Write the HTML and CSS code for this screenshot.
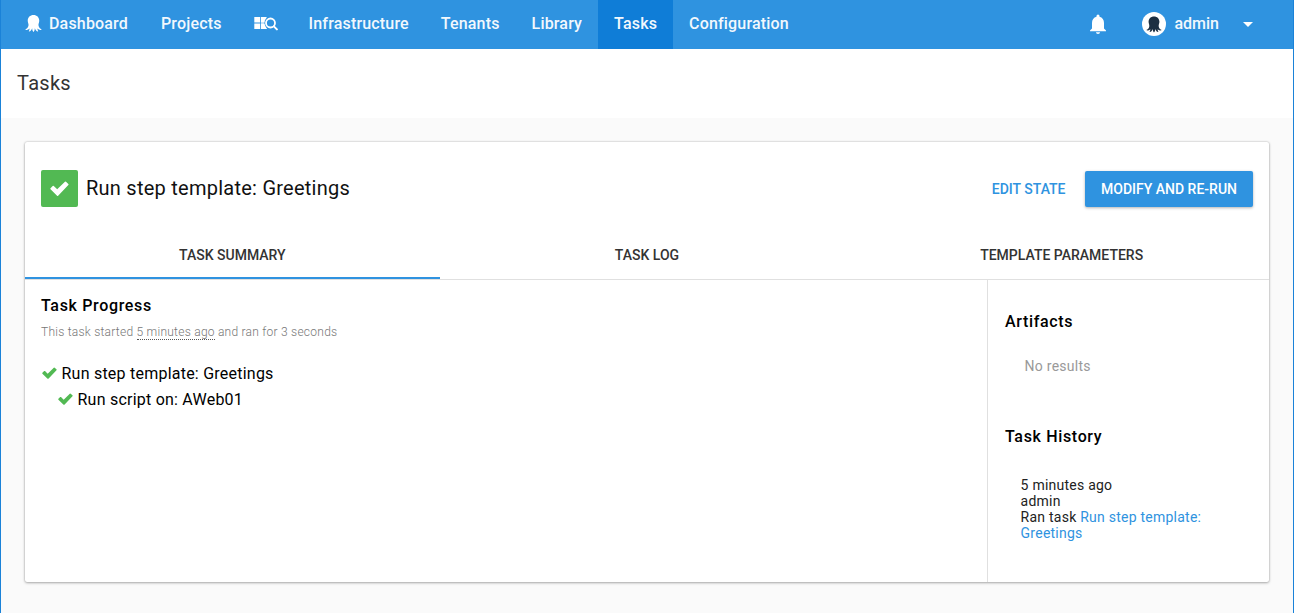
FILE: index.html
```html
<!DOCTYPE html>
<html lang="en">
<head>
<meta charset="utf-8">
<title>Tasks</title>
<link rel="stylesheet" href="styles.css">
</head>
<body>
<svg class="sprite" width="0" height="0">
  <symbol id="octopus" viewBox="0 0 18 19">
    <path d="M9 .5C5.400.5 2.900 3 2.900 6.500c0 2 1.100 3.200.8 5.200C3.400 13.800 2 15 .3 15.800c1.200 1 2.900.6 4.600-.9-.1 1.200-.4 2-.9 3 1.700.2 2.700-1.200 3.600-3.400.1 1.800.4 3 1.400 4 1-1 1.300-2.200 1.400-4 .9 2.200 1.900 3.600 3.600 3.400-.5-1-.8-1.800-.9-3 1.700 1.500 3.400 1.900 4.600.9-1.700-.8-3.100-2-3.400-4.100-.3-2 .8-3.200.8-5.200C15.100 3 12.600.5 9 .5z"/>
  </symbol>
  <symbol id="check" viewBox="0 0 14 11">
    <path d="M5.200 10.800.4 6.100a.6.6 0 0 1 0-.8L2 3.700a.6.6 0 0 1 .8 0l2.500 2.400L11 .5a.6.6 0 0 1 .8 0l1.700 1.600a.6.6 0 0 1 0 .8L6 10.800a.6.6 0 0 1-.8 0z"/>
  </symbol>
</svg>
<div class="app">
  <header class="topbar">
    <nav class="nav">
      <a class="nav-item nav-home"><svg class="logo"><use href="#octopus"/></svg>Dashboard</a>
      <a class="nav-item">Projects</a>
      <a class="nav-item nav-search">
        <svg width="24" height="15" viewBox="0 0 24 15">
          <path fill="#fff" d="M.3 1h5.900v5.600H.3zM.3 7.400h5.900V13H.3zM7 1h5.500v5.600H7zM7 7.400h5.500V13H7z"/>
          <circle cx="16.500" cy="7" r="6.200" fill="#2f93e0"/>
          <path fill="#fff" d="M7 1h5.500l-2 3v2.600H7zM7 7.400h3.300l.7 3 2 2.600H7z"/>
          <circle cx="16.500" cy="7" r="4.500" fill="none" stroke="#fff" stroke-width="1.800"/>
          <path d="m19.900 10.400 3 3" stroke="#fff" stroke-width="2" stroke-linecap="round"/>
        </svg>
      </a>
      <a class="nav-item">Infrastructure</a>
      <a class="nav-item">Tenants</a>
      <a class="nav-item">Library</a>
      <a class="nav-item active">Tasks</a>
      <a class="nav-item">Configuration</a>
    </nav>
    <div class="account">
      <svg class="bell" width="16" height="20" viewBox="0 0 16 20"><path fill="#fff" d="M8 20c1.100 0 2-.8 2-1.700H6C6 19.200 6.900 20 8 20zm6-5.500V9c0-3.100-1.600-5.600-4.500-6.300V2a1.500 1.500 0 0 0-3 0v.7C3.600 3.400 2 5.900 2 9v5.500l-2 2v.8h16v-.8z"/></svg>
      <span class="avatar"><svg><use href="#octopus"/></svg></span>
      <span class="user">admin</span>
      <svg class="caret" width="10" height="5" viewBox="0 0 10 5"><path fill="#fff" d="M0 0h10L5 5z"/></svg>
    </div>
  </header>
  <div class="page-head">Tasks</div>
  <main class="content">
    <section class="card">
      <div class="card-head">
        <span class="status"><svg><use href="#check"/></svg></span>
        <h1 class="title">Run step template: Greetings</h1>
        <a class="edit">EDIT STATE</a>
        <button class="primary">MODIFY AND RE-RUN</button>
      </div>
      <div class="tabs">
        <div class="tab selected">TASK SUMMARY</div>
        <div class="tab">TASK LOG</div>
        <div class="tab">TEMPLATE PARAMETERS</div>
      </div>
      <div class="card-body">
        <div class="progress">
          <h2>Task Progress</h2>
          <p class="started">This task started <span class="ago">5 minutes ago</span> and ran for 3 seconds</p>
          <div class="step"><svg><use href="#check"/></svg>Run step template: Greetings</div>
          <div class="step child"><svg><use href="#check"/></svg>Run script on: AWeb01</div>
        </div>
        <aside class="side">
          <h2>Artifacts</h2>
          <p class="empty">No results</p>
          <h2>Task History</h2>
          <div class="history">5 minutes ago<br>admin<br>Ran task <a>Run step template:<br>Greetings</a></div>
        </aside>
      </div>
    </section>
  </main>
</div>
</body>
</html>
```
FILE: styles.css
```css
* { box-sizing: border-box; }
body { margin: 0; font-family: Roboto, sans-serif; color: #000; }
h1, h2, p { margin: 0; }
.sprite { display: block; position: absolute; }
.app { height: 613px; border: solid #1a82d8; border-width: 0 1px; background: #fafafa; display: flex; flex-direction: column; overflow: hidden; }
.topbar { height: 49px; background: #2f93e0; display: flex; justify-content: space-between; color: #fff; font-size: 16px; font-weight: 500; }
.nav { display: flex; padding-left: 8px; letter-spacing: .17px; }
.nav-item { display: flex; align-items: center; padding: 0 16px 2px; color: #f2f8fd; }
.nav-item.active { background: #0f7dd7; }
.logo { width: 17px; height: 19px; margin-right: 7px; fill: #fff; }
.nav-home { padding-right: 17px; }
.nav-search { padding-right: 15px; }
.account { display: flex; align-items: center; padding-right: 40px; }
.bell { margin: 0 36px 2px 0; }
.avatar { width: 24px; height: 24px; border-radius: 50%; background: #fff; display: flex; align-items: center; justify-content: center; margin: 0 8px 1px 0; }
.avatar svg { width: 16px; height: 17px; fill: #1c2f42; }
.user { padding-bottom: 2px; color: #f2f8fd; }
.caret { margin-left: 24px; }
.page-head { height: 69px; background: #fff; padding: 22px 16px; font-size: 20px; line-height: 24px; letter-spacing: .3px; color: #333; }
.content { padding: 24px 24px 0; }
.card { background: #fff; height: 440px; border-radius: 2px; box-shadow: 0 1px 3px rgba(0,0,0,.28), 0 0 2px rgba(0,0,0,.25); display: flex; flex-direction: column; }
.card-head { height: 93px; display: flex; align-items: center; padding: 0 16px; }
.status { width: 37px; height: 37px; border-radius: 2px; background: #52b953; display: flex; align-items: center; justify-content: center; margin-right: 8px; }
.status svg { width: 19px; height: 15px; fill: #fff; }
.title { font-size: 20px; font-weight: 400; letter-spacing: .25px; flex: 1; color: #111; padding-bottom: 2px; }
.edit { font-size: 14px; font-weight: 500; color: #2f93e0; margin-right: 19.5px; }
.primary { height: 36px; width: 168px; border: 0; border-radius: 2px; background: #2f93e0; color: #fff; font: 500 14px Roboto, sans-serif; padding: 0; box-shadow: 0 1px 3px rgba(0,0,0,.3); }
.tabs { display: grid; grid-template-columns: repeat(3, 1fr); height: 45px; border-bottom: 1px solid #e0e0e0; }
.tab { font-size: 14px; font-weight: 500; line-height: 16px; padding-top: 12px; text-align: center; color: #333; }
.tab.selected { border-bottom: 2px solid #2f93e0; }
.card-body { flex: 1; display: flex; }
.progress { flex: 1; padding: 16px; }
h2 { font-size: 16px; line-height: 20px; font-weight: 500; letter-spacing: .66px; }
.started { font-size: 12px; line-height: 16px; margin: 8px 0 20px; font-weight: 300; letter-spacing: .25px; color: #777; }
.ago { border-bottom: 1px dotted #555; }
.step { display: flex; align-items: center; height: 26px; font-size: 16px; letter-spacing: .23px; }
.step svg { width: 15px; height: 12px; fill: #52b953; margin: 0 5px 0 .5px; }
.child { padding-left: 16px; }
.side { width: 282px; border-left: 1px solid #e0e0e0; padding: 32px 16px 0 17px; }
.empty { font-size: 14px; line-height: 16px; letter-spacing: .27px; color: #999; margin: 26px 0 53px 19.500px; }
.history { margin: 30px 0 0 15.600px; font-size: 14px; line-height: 16px; letter-spacing: .24px; color: #222; }
.history a { color: #2f93e0; }
```
